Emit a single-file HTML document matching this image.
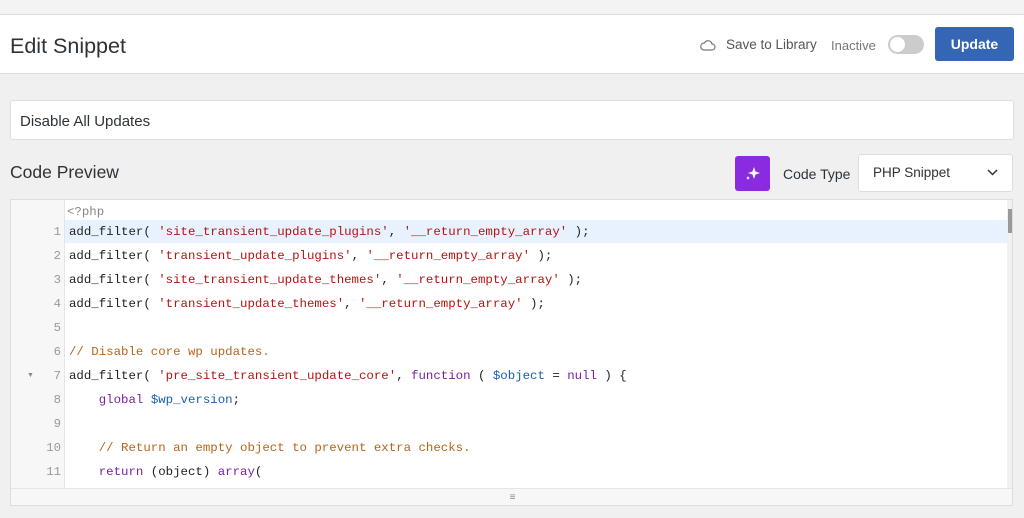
<!DOCTYPE html>
<html><head><style>
body{margin:0;width:1024px;height:518px;background:#f0f0f1;font-family:"Liberation Sans",sans-serif;position:relative;overflow:hidden}
.top{position:absolute;left:0;top:0;width:1024px;height:14px;background:#f3f3f4;border-bottom:1px solid #dcdcde}
.hdr{position:absolute;left:0;top:15px;width:1024px;height:58px;background:#fff;border-bottom:1px solid #dcdcde}
.abs{position:absolute}
.code{position:absolute;left:10px;top:199px;width:1003px;height:307px;border:1px solid #ddd;background:#fff;box-sizing:border-box;overflow:hidden}
.gut{position:absolute;left:0;top:0;width:53px;height:288px;background:#f7f7f7;border-right:1px solid #e5e5e5}
.ln{position:absolute;left:0;width:50px;text-align:right;font:12.3px "Liberation Mono",monospace;color:#999}
.cl{position:absolute;left:58px;font:12.4px "Liberation Mono",monospace;color:#222;white-space:pre}
.s{color:#b31412}.c{color:#b5651d}.k{color:#7a1fa2}.v{color:#1a5fb4}
</style></head><body>
<div class="top"></div>
<div class="hdr">
<div class="abs" style="left:10px;top:19px;font-size:21.5px;color:#2c3338">Edit Snippet</div>
<svg class="abs" style="left:700px;top:24px" width="16" height="12" viewBox="0 0 16 12"><path d="M4 11h8a3 3 0 0 0 0-6 4 4 0 0 0-7.5-1A3.5 3.5 0 0 0 4 11z" fill="none" stroke="#777" stroke-width="1.2"/></svg>
<div class="abs" style="left:726px;top:22px;font-size:13.5px;color:#50575e">Save to Library</div>
<div class="abs" style="left:831px;top:23px;font-size:13px;color:#777">Inactive</div>
<div class="abs" style="left:888px;top:20px;width:36px;height:19px;border-radius:10px;background:#ccc"><div style="position:absolute;left:2px;top:2px;width:15px;height:15px;border-radius:50%;background:#fff"></div></div>
<div class="abs" style="left:935px;top:12px;width:79px;height:34px;background:#3565b5;border-radius:3px;color:#fff;font-weight:bold;font-size:14px;text-align:center;line-height:34px">Update</div>
</div>
<div class="abs" style="left:10px;top:100px;width:1004px;height:40px;background:#fff;border:1px solid #ddd;box-sizing:border-box;border-radius:3px;font-size:15px;color:#2c3338;line-height:42px;padding-left:9px">Disable All Updates</div>
<div class="abs" style="left:10px;top:162px;font-size:17.5px;color:#2c3338">Code Preview</div>
<div class="abs" style="left:735px;top:156px;width:35px;height:35px;background:#8a2be2;border-radius:3px"><svg width="35" height="35" viewBox="0 0 35 35"><path d="M19 11l1.5 4.5L25 17l-4.5 1.5L19 23l-1.5-4.5L13 17l4.5-1.5z" fill="#fff"/><path d="M13 20l.6 1.4L15 22l-1.4.6L13 24l-.6-1.4L11 22l1.4-.6z" fill="#fff"/></svg></div>
<div class="abs" style="left:783px;top:166px;font-size:14px;color:#2c3338">Code Type</div>
<div class="abs" style="left:858px;top:154px;width:155px;height:38px;background:#fff;border:1px solid #ddd;box-sizing:border-box;border-radius:3px;font-size:13.5px;color:#2c3338;line-height:36px;padding-left:14px">PHP Snippet<svg style="position:absolute;right:14px;top:14px" width="11" height="7"><path d="M1 1l4.5 4.5L10 1" fill="none" stroke="#333" stroke-width="1.5"/></svg></div>
<div class="code">
<div class="gut"></div>
<div class="abs" style="left:54px;top:20px;width:942px;height:23px;background:#e8f2fe"></div>
<div class="abs" style="left:996px;top:0;width:7px;height:288px;background:#f1f1f1"><div style="position:absolute;left:1px;top:9px;width:4px;height:24px;background:#999"></div></div>
<div class="abs" style="left:0;top:288px;width:1003px;height:19px;background:#f7f7f7;border-top:1px solid #e5e5e5;text-align:center;font-size:10px;color:#888;line-height:18px">≡</div>
<div class="cl" style="top:5px;left:56px;color:#888">&lt;?php</div>
<div class="ln" style="top:25px">1</div><div class="cl" style="top:25px">add_filter( <span class="s">'site_transient_update_plugins'</span>, <span class="s">'__return_empty_array'</span> );</div>
<div class="ln" style="top:49px">2</div><div class="cl" style="top:49px">add_filter( <span class="s">'transient_update_plugins'</span>, <span class="s">'__return_empty_array'</span> );</div>
<div class="ln" style="top:73px">3</div><div class="cl" style="top:73px">add_filter( <span class="s">'site_transient_update_themes'</span>, <span class="s">'__return_empty_array'</span> );</div>
<div class="ln" style="top:97px">4</div><div class="cl" style="top:97px">add_filter( <span class="s">'transient_update_themes'</span>, <span class="s">'__return_empty_array'</span> );</div>
<div class="ln" style="top:121px">5</div>
<div class="ln" style="top:145px">6</div><div class="cl c" style="top:145px">// Disable core wp updates.</div>
<div class="abs" style="left:16px;top:172px;font-size:7px;color:#888">▼</div>
<div class="ln" style="top:169px">7</div><div class="cl" style="top:169px">add_filter( <span class="s">'pre_site_transient_update_core'</span>, <span class="k">function</span> ( <span class="v">$object</span> = <span class="k">null</span> ) {</div>
<div class="ln" style="top:193px">8</div><div class="cl" style="top:193px">    <span class="k">global</span> <span class="v">$wp_version</span>;</div>
<div class="ln" style="top:217px">9</div>
<div class="ln" style="top:241px">10</div><div class="cl c" style="top:241px">    // Return an empty object to prevent extra checks.</div>
<div class="ln" style="top:265px">11</div><div class="cl" style="top:265px">    <span class="k">return</span> (object) <span class="k">array</span>(</div>
</div>
</body></html>
